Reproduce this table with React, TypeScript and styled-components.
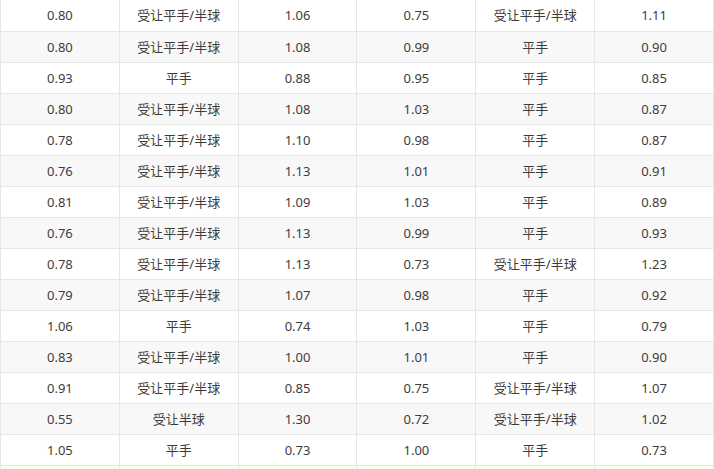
import styled, { createGlobalStyle } from "styled-components";

const Global = createGlobalStyle`
  html, body {
    margin: 0;
    padding: 0;
    background: #fff;
  }
  body {
    font-family: "Noto Sans", "Noto Sans CJK SC", sans-serif;
    overflow: hidden;
  }
`;

const Table = styled.table`
  width: 714px;
  border-collapse: collapse;
  table-layout: fixed;
  border-left: 1px solid #e6e6e6;
  border-right: 1px solid #e6e6e6;
  font-size: 13px;
  color: #3c3c3c;
`;

const Row = styled.tr<{ $stripe?: boolean; $hover?: boolean }>`
  height: 31px;
  background: ${(p) => (p.$hover ? "#fdfbe9" : p.$stripe ? "#f8f8f8" : "#fff")};
`;

const Cell = styled.td`
  padding: 0;
  text-align: center;
  vertical-align: middle;
  border-right: 1px solid #e6e6e6;
  border-bottom: 1px solid #e6e6e6;
  line-height: 30px;
  white-space: nowrap;
  &:last-child {
    border-right: none;
  }
`;

const A = "受让平手/半球";
const B = "平手";

const rows: string[][] = [
  ["0.80", A, "1.06", "0.75", A, "1.11"],
  ["0.80", A, "1.08", "0.99", B, "0.90"],
  ["0.93", B, "0.88", "0.95", B, "0.85"],
  ["0.80", A, "1.08", "1.03", B, "0.87"],
  ["0.78", A, "1.10", "0.98", B, "0.87"],
  ["0.76", A, "1.13", "1.01", B, "0.91"],
  ["0.81", A, "1.09", "1.03", B, "0.89"],
  ["0.76", A, "1.13", "0.99", B, "0.93"],
  ["0.78", A, "1.13", "0.73", A, "1.23"],
  ["0.79", A, "1.07", "0.98", B, "0.92"],
  ["1.06", B, "0.74", "1.03", B, "0.79"],
  ["0.83", A, "1.00", "1.01", B, "0.90"],
  ["0.91", A, "0.85", "0.75", A, "1.07"],
  ["0.55", "受让半球", "1.30", "0.72", A, "1.02"],
  ["1.05", B, "0.73", "1.00", B, "0.73"],
  ["", "", "", "", "", ""],
];

export default function App() {
  return (
    <>
      <Global />
      <Table>
        <tbody>
          {rows.map((r, i) => (
            <Row key={i} $stripe={i % 2 === 1} $hover={i === 15}>
              {r.map((c, j) => (
                <Cell key={j}>{c}</Cell>
              ))}
            </Row>
          ))}
        </tbody>
      </Table>
    </>
  );
}
